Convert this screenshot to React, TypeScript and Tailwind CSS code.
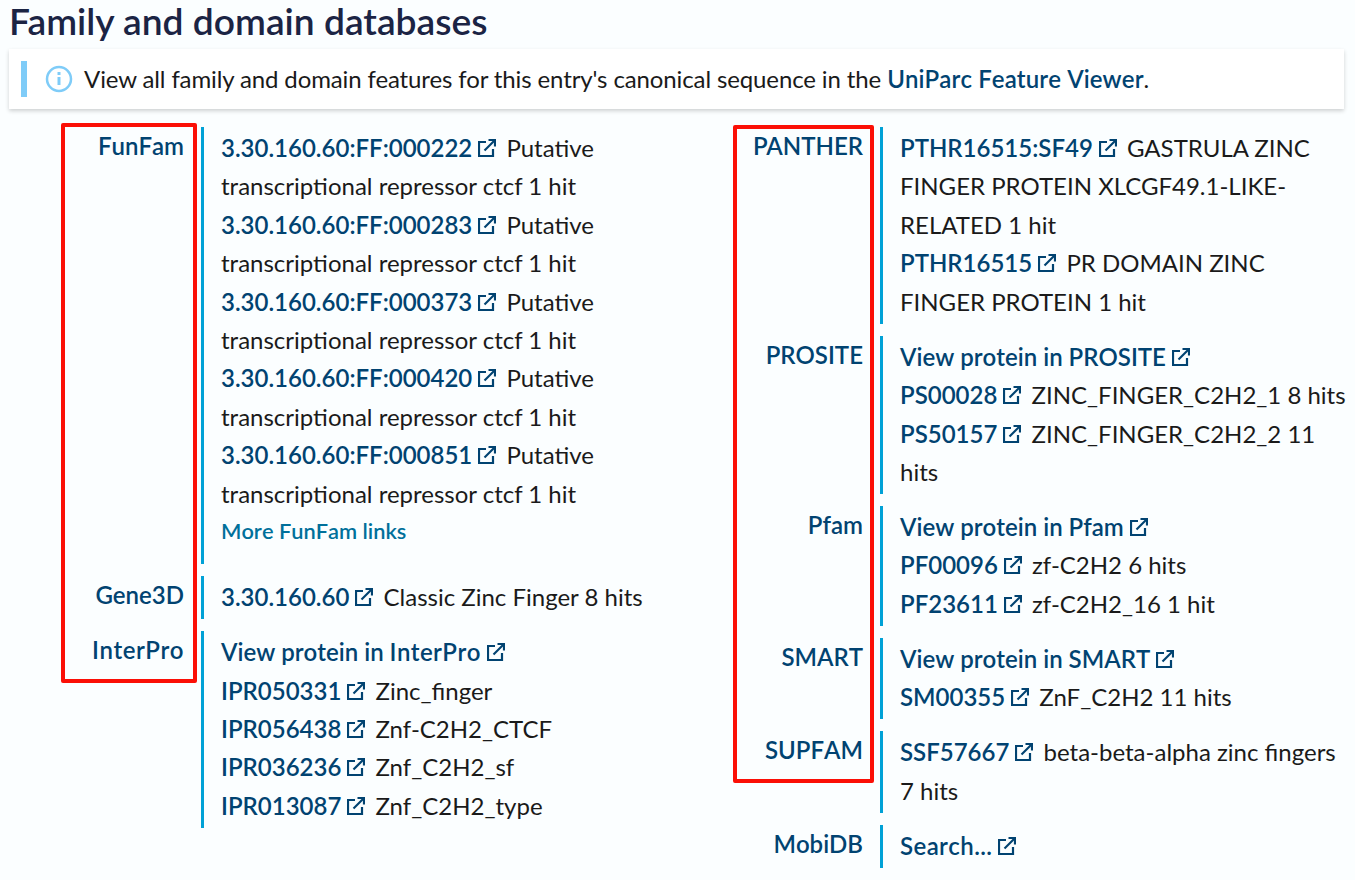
import type { ReactNode } from "react";

const LINK = "font-semibold text-[#014371] [font-kerning:none]";

function ExternalIcon() {
  return (
    <svg viewBox="0 0 18 18" className="mr-[4px] ml-[6px] inline-block h-[18px] w-[18px] align-[0px] text-[#014371]" fill="none" stroke="currentColor" strokeWidth="2.2">
      <path d="M8 3H1v14h14v-7" />
      <path d="M6.5 11.5 16 2" />
      <path d="M10.5 1H17v6.5" />
    </svg>
  );
}

/** Link followed by the external marker. */
function Ext({ children }: { children: ReactNode }) {
  return (
    <>
      <a className={LINK}>{children}</a>
      <ExternalIcon />
    </>
  );
}

function Hit({ id, text }: { id: string; text: string }) {
  return (
    <div>
      <Ext>{id}</Ext> {text}
    </div>
  );
}

function Row({ label, children }: { label: ReactNode; children: ReactNode }) {
  return (
    <div className="flex">
      <div className={`w-[175px] shrink-0 text-right leading-[38px] ${LINK}`}>{label}</div>
      <div className="ml-[17px] flex-1 border-l-[3px] border-[#00a1d6] pt-[2px] pb-[2.7px] pl-[17px]">{children}</div>
    </div>
  );
}

const FUNFAM = ["000222", "000283", "000373", "000420", "000851"];

export default function App() {
  return (
    <div className="relative h-[880px] w-[1355px] overflow-hidden bg-[#fbfeff] px-[9px] font-['Lato',sans-serif] text-[24px] leading-[38.4px] text-[#1a1a1a]">
      <h2 className="text-[37.2px] leading-[42px] font-semibold text-[#1b2444]">Family and domain databases</h2>

      <div className="mt-[7px] flex h-[60px] w-[1335px] items-center bg-white pl-[12px] shadow-[0_2px_4px_rgba(0,0,0,0.18)]">
        <div className="h-[36px] w-[6px] bg-[#7fccf8]" />
        <svg viewBox="0 0 28 28" className="ml-[18px] h-[28px] w-[28px]" fill="none" stroke="#7fccf8">
          <circle cx="14" cy="14" r="12" strokeWidth="2.5" />
          <path d="M14 12v8" strokeWidth="3" />
          <path d="M14 7v3" strokeWidth="3" />
        </svg>
        <p className="ml-[11px] tracking-[-0.12px]">
          View all family and domain features for this entry's canonical sequence in the <a className={`${LINK} tracking-[0.1px]`}>UniParc Feature Viewer</a>.
        </p>
      </div>

      <div className="mt-[18px] grid grid-cols-[656px_664px] gap-x-[23px]">
        <div className="flex flex-col gap-[12px]">
          <Row label="FunFam">
            {FUNFAM.map((id) => (
              <Hit key={id} id={`3.30.160.60:FF:${id}`} text="Putative transcriptional repressor ctcf 1 hit" />
            ))}
            <a className="block pb-[13.4px] text-[21.8px] leading-[35px] font-semibold text-[#00709b] [font-kerning:none]">More FunFam links</a>
          </Row>
          <Row label="Gene3D">
            <Hit id="3.30.160.60" text="Classic Zinc Finger 8 hits" />
          </Row>
          <Row label={<span className="tracking-[0.5px]">InterPro</span>}>
            <div><Ext>View protein in <span className="tracking-[0.4px]">InterPro</span></Ext></div>
            <Hit id="IPR050331" text="Zinc_finger" />
            <Hit id="IPR056438" text="Znf-C2H2_CTCF" />
            <Hit id="IPR036236" text="Znf_C2H2_sf" />
            <Hit id="IPR013087" text="Znf_C2H2_type" />
          </Row>
        </div>

        <div className="flex flex-col gap-[12px]">
          <Row label={<span className="[font-kerning:normal]">PANTHER</span>}>
            <Hit id="PTHR16515:SF49" text="GASTRULA ZINC FINGER PROTEIN XLCGF49.1-LIKE-RELATED 1 hit" />
            <Hit id="PTHR16515" text="PR DOMAIN ZINC FINGER PROTEIN 1 hit" />
          </Row>
          <Row label="PROSITE">
            <div><Ext>View protein in PROSITE</Ext></div>
            <Hit id="PS00028" text="ZINC_FINGER_C2H2_1 8 hits" />
            <Hit id="PS50157" text="ZINC_FINGER_C2H2_2 11 hits" />
          </Row>
          <Row label="Pfam">
            <div><Ext>View protein in Pfam</Ext></div>
            <Hit id="PF00096" text="zf-C2H2 6 hits" />
            <Hit id="PF23611" text="zf-C2H2_16 1 hit" />
          </Row>
          <Row label="SMART">
            <div><Ext>View protein in SMART</Ext></div>
            <Hit id="SM00355" text="ZnF_C2H2 11 hits" />
          </Row>
          <Row label="SUPFAM">
            <Hit id="SSF57667" text="beta-beta-alpha zinc fingers 7 hits" />
          </Row>
          <Row label="MobiDB">
            <div><Ext><span className="tracking-[0.4px]">Search...</span></Ext></div>
          </Row>
        </div>
      </div>

      {/* annotation boxes drawn over the list */}
      <div className="absolute top-[123px] left-[61px] h-[560px] w-[136px] rounded-[2px] border-4 border-[#fb0f06]" />
      <div className="absolute top-[125px] left-[733px] h-[658px] w-[141px] rounded-[2px] border-4 border-[#fb0f06]" />
    </div>
  );
}
